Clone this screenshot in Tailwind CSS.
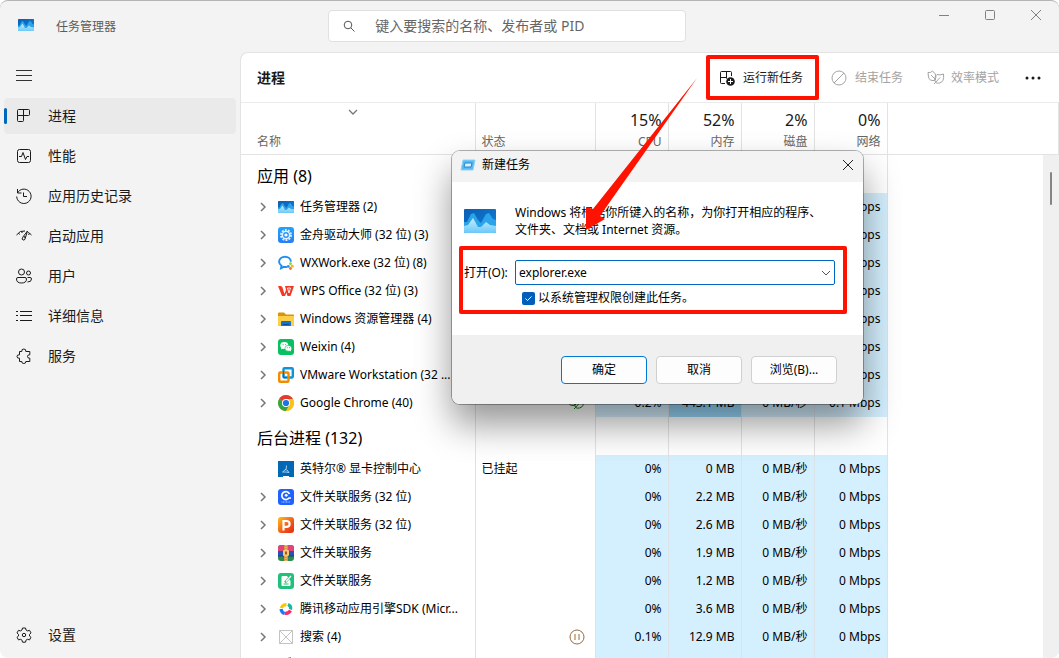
<!DOCTYPE html>
<html lang="zh-CN">
<head>
    <meta charset="UTF-8">
    <meta name="viewport" content="width=device-width, initial-scale=1.0">
    <title>任务管理器</title>
    <script src="https://cdn.jsdelivr.net/npm/@tailwindcss/browser@4"></script>
</head>
<body class="h-screen overflow-hidden bg-white font-['Noto_Sans','Noto_Sans_CJK_SC',sans-serif] text-xs text-[#1a1a1a]">
    <!-- Shared icons -->
    <svg class="absolute size-0" aria-hidden="true">
        <defs>
            <linearGradient id="tmSky" x1="0" y1="0" x2="1" y2="1"><stop offset="0" stop-color="#0a5fb4"/><stop offset="1" stop-color="#1080d6"/></linearGradient>
            <linearGradient id="tmWave" x1="0" y1="0" x2="0" y2="1"><stop offset="0" stop-color="#c4efff"/><stop offset="1" stop-color="#6cc8f8"/></linearGradient>
            <linearGradient id="pGrad" x1="0" y1="0" x2="1" y2="1"><stop offset="0" stop-color="#ffc21c"/><stop offset=".6" stop-color="#f2541b"/><stop offset="1" stop-color="#e02a10"/></linearGradient>
            <linearGradient id="blueGrad" x1="0" y1="0" x2="0" y2="1"><stop offset="0" stop-color="#1fa4fb"/><stop offset="1" stop-color="#2b7df5"/></linearGradient>
        </defs>
        <symbol id="taskmgr" viewBox="0 0 32 24">
            <rect width="32" height="24" rx="1" fill="url(#tmSky)"/>
            <path d="M0 13h3l4-8 3-1 4 7 3 3 5-9 3-1 4 6 3 1v10H0z" fill="#2ba3ea"/>
            <path d="M0 17l4-1 5-7 5 9h3l5-5 4 3 6 1v6q0 1-1 1H1q-1 0-1-1z" fill="url(#tmWave)"/>
        </symbol>
        <symbol id="chevron" viewBox="0 0 8 10"><path d="M2 1l4 4-4 4" fill="none" stroke="#777" stroke-width="1.5"/></symbol>
        <symbol id="driver" viewBox="0 0 16 16">
            <rect width="16" height="16" rx="3" fill="url(#blueGrad)"/>
            <circle cx="8" cy="8" r="5" fill="none" stroke="#d6ecff" stroke-width="2" stroke-dasharray="2 1.1"/>
            <circle cx="8" cy="8" r="3.600" fill="none" stroke="#e6f4ff" stroke-width="1.4"/>
            <circle cx="8" cy="8" r="1.6" fill="#fff"/>
        </symbol>
        <symbol id="wxwork" viewBox="0 0 16 16">
            <path d="M9 11.8c-1 .3-2.200.3-3.200 0L3 13.200l.5-2.500C1.700 9.500 1 8 1.100 6.500 1.400 3.600 4 1.700 7 1.700s5.800 2 5.900 5" fill="none" stroke="#1e8ff0" stroke-width="1.900"/>
            <circle cx="12.500" cy="8.700" r="1.400" fill="#8cd13c"/><circle cx="14.300" cy="11.200" r="1.400" fill="#fbb117"/><circle cx="12.500" cy="13.500" r="1.400" fill="#fb6a2a"/><circle cx="10.300" cy="11.400" r="1.400" fill="#2a8ff5"/>
        </symbol>
        <symbol id="wps" viewBox="0 0 16 16">
            <path d="M0 3h4l2.500 8L8 6.500 7 3h9l-3.500 10h-3L8.500 9.500 7 13H4z" fill="#f03a26"/>
            <path d="M3 3h2l2 6M9.500 5h3L11 10 9.500 5" fill="none" stroke="#fff" stroke-width=".9"/>
        </symbol>
        <symbol id="folder" viewBox="0 0 16 16">
            <path d="M0 2.500q0-1 1-1h5l2 2h7q1 0 1 1V14q0 1-1 1H1q-1 0-1-1z" fill="#d99408"/>
            <path d="M0 5h16v9q0 1-1 1H1q-1 0-1-1z" fill="#fccf49"/>
            <path d="M3 15v-4q0-1 1-1h8q1 0 1 1v4z" fill="#1673c8"/><path d="M5 13h6v1H5z" fill="#0b4f96"/>
        </symbol>
        <symbol id="weixin" viewBox="0 0 16 16">
            <rect width="16" height="16" rx="3" fill="#07c160"/>
            <ellipse cx="6.300" cy="6.500" rx="4" ry="3.400" fill="#fff"/><path d="M3.500 8l-.5 2.500L6 9z" fill="#fff"/>
            <ellipse cx="10.300" cy="9.300" rx="3.400" ry="2.900" fill="#fff" stroke="#07c160" stroke-width=".6"/><path d="M11 11l2 1.500-.2-2.500z" fill="#fff"/>
            <path d="M4.700 5.700h.9M7.200 5.700h.9M8.900 8.700h.8M11 8.700h.8" stroke="#07c160"/>
        </symbol>
        <symbol id="vmware" viewBox="0 0 16 16">
            <rect x="5.500" y="1.200" width="9.300" height="9.300" rx="1" fill="none" stroke="#0f95d7" stroke-width="2.400"/>
            <rect x="1.200" y="5.500" width="9.300" height="9.300" rx="1" fill="none" stroke="#f38b00" stroke-width="2.400"/>
            <path d="M5.500 4v6.500H9" fill="none" stroke="#0a6cab" stroke-width="1.200"/>
        </symbol>
        <symbol id="chrome" viewBox="0 0 16 16">
            <circle cx="8" cy="8" r="8" fill="#fbc116"/>
            <path d="M8 8L1.100 4A8 8 0 0 1 14.900 4H8z" fill="#e33b2e"/>
            <path d="M8 8L1.100 4A8 8 0 0 0 8 16l3.500-6z" fill="#2da44e"/>
            <path d="M8 4h6.900A8 8 0 0 1 8 16l3.500-6z" fill="#fbc116"/>
            <circle cx="8" cy="8" r="4" fill="#fff"/><circle cx="8" cy="8" r="3.100" fill="#1a73e8"/>
        </symbol>
        <symbol id="intel" viewBox="0 0 16 16">
            <rect width="16" height="16" fill="#0068b5"/>
            <path d="M8.500 4.500L8 9.500M8 8l-3.500 3h3.500l3 .5L9 9" fill="none" stroke="#cfe8fb" stroke-width=".8"/><path d="M5 15h6v1H5z" fill="#fff"/>
        </symbol>
        <symbol id="player" viewBox="0 0 16 16">
            <rect width="16" height="16" rx="3" fill="#1f62ff"/>
            <path d="M11.500 5A4 4 0 1 0 11 9h2" fill="none" stroke="#fff" stroke-width="1.700"/><circle cx="8.200" cy="6.300" r="1.400" fill="#fff"/>
            <path d="M3.500 13h9" stroke="#7fa6ff" stroke-width="1.600" stroke-dasharray="1 .5"/>
        </symbol>
        <symbol id="pdf" viewBox="0 0 16 16">
            <rect width="16" height="16" rx="3" fill="url(#pGrad)"/>
            <path d="M5.500 13.500V4H9q2.600.3 2.600 2.900T9 9.800H5.500" fill="none" stroke="#fff" stroke-width="2.200"/>
        </symbol>
        <symbol id="archive" viewBox="0 0 16 16">
            <rect width="16" height="16" rx="3" fill="#2e8b4f"/>
            <path d="M0 6h16V3q0-3-3-3H3Q0 0 0 3z" fill="#e0447a"/><path d="M0 6h16v5H0z" fill="#2753b5"/>
            <path d="M0 10.500h16v1H0z" fill="#1b3d80"/>
            <path d="M6 0h4v16H6z" fill="#d9963f"/><path d="M8 0v5M8 11v5" stroke="#f8dc98" stroke-dasharray="1 1"/>
            <rect x="5" y="5" width="6" height="6" rx="1" fill="#f2c877"/><path d="M7 6.500h2v3H7z" fill="#a55a26"/>
        </symbol>
        <symbol id="editor" viewBox="0 0 16 16">
            <rect width="16" height="16" rx="3" fill="#22c17b"/>
            <path d="M9 3H4.500Q3.500 3 3.500 4v8q0 1 1 1h7q1 0 1-1V8z" fill="#fff"/>
            <path d="M7 9.500l5.500-6" stroke="#22c17b" stroke-width="2.400"/><path d="M8 8.500l5-5.500" stroke="#fff" stroke-width="1.200"/><path d="M5.500 11h5" stroke="#22c17b"/>
        </symbol>
        <symbol id="tencent" viewBox="0 0 16 16">
            <g fill="none" stroke-width="3.200"><path d="M3.500 7q.5-3 5-3.500" stroke="#ffc400"/><path d="M10 3.500Q13.500 5 12.500 8.500" stroke="#16b8a4"/><path d="M12.500 9.500Q11 12.500 6.500 12.500" stroke="#ff2a6a"/><path d="M6.500 12.500Q3.500 11.500 3 8" stroke="#187bf5"/></g>
        </symbol>
        <symbol id="missing" viewBox="0 0 16 16"><path d="M1.500 1.500h13v13h-13zl13 13m0-13l-13 13" fill="none" stroke="#c4c4c4"/></symbol>
        <symbol id="green" viewBox="0 0 16 16"><path d="M8 2.500Q9 .5 13 0v3z" fill="#4da32f"/></symbol>
        <symbol id="leaf" viewBox="0 0 18 16">
            <path d="M1 2.500q3 .5 4.500-1.500Q9 3.500 9 7l-1.500 3.500Q2 11 1.500 7zM4 5l5 5M8.500 12.500Q6.500 7 10 4.500q3 1 6.500-.500 1 8-4 9-2.500.5-4-.500L7 14M8.500 12.500l4.500-5" fill="none" stroke="currentColor"/>
        </symbol>
    </svg>

    <div class="flex h-full flex-col overflow-hidden rounded-lg border-t border-[#b4b4b4] bg-[#f3f3f3]">
        <!-- Title bar -->
        <header class="relative flex h-[51px] shrink-0 items-center justify-between">
            <div class="flex items-center gap-[22px] pl-[18px]">
                <svg class="mb-1 h-3 w-4"><use href="#taskmgr"/></svg>
                <h1 class="text-[#5c5c5c]">任务管理器</h1>
            </div>
            <label class="absolute left-[31%] top-[9px] flex h-8 w-[358px] items-center gap-5 rounded border border-[#e0e0e0] bg-white px-3.5">
                <svg class="size-3" viewBox="0 0 12 12" fill="none" stroke="#555"><circle cx="5" cy="5" r="3.800"/><path d="M8 8l3.500 3.500"/></svg>
                <input type="search" aria-label="搜索" placeholder="键入要搜索的名称、发布者或 PID" class="flex-1 text-sm outline-none placeholder:text-[#666]">
            </label>
            <div class="flex h-full gap-[34px] pr-[17px] pt-2 text-[#808080]">
                <button aria-label="最小化" class="size-3"><svg viewBox="0 0 12 12" fill="none" stroke="currentColor"><path d="M1 6.500h10"/></svg></button>
                <button aria-label="最大化" class="size-3"><svg viewBox="0 0 12 12" fill="none" stroke="currentColor"><rect x="1.500" y="1.500" width="9" height="9" rx="1"/></svg></button>
                <button aria-label="关闭" class="size-3"><svg viewBox="0 0 12 12" fill="none" stroke="currentColor"><path d="M1 1l10 10M11 1L1 11"/></svg></button>
            </div>
        </header>

        <div class="flex min-h-0 flex-1">
            <!-- Sidebar -->
            <nav class="flex w-60 shrink-0 flex-col px-1 pb-[3px] text-sm">
                <button aria-label="导航" class="flex h-[46px] items-center pl-3"><svg class="size-4" viewBox="0 0 16 16" stroke="#333"><path d="M0 3.500h16M0 8.500h16M0 13.500h16"/></svg></button>
                <div class="flex flex-col">
                    <a href="#" class="flex h-9 items-center rounded bg-[#eaeaea]">
                        <span class="h-4 w-[3px] rounded bg-[#0067c0]"></span>
                        <svg class="ml-[9px] mr-4 size-4" viewBox="0 0 16 16" fill="none" stroke="currentColor"><path d="M2.500 1.500h10q1 0 1 1v4q0 1-1 1h-11v-5q0-1 1-1zM7.500 1.500v11q0 1-1 1h-4q-1 0-1-1v-5"/></svg>进程
                    </a>
                    <a href="#" class="mt-0.5 flex h-10 items-center pl-3">
                        <svg class="mr-4 size-4" viewBox="0 0 16 16" fill="none" stroke="currentColor"><rect x="1.500" y="1.500" width="13" height="13" rx="2"/><path d="M3 8.500h2.500l1.500-4 2.500 7 1.500-3h2"/></svg>性能
                    </a>
                    <a href="#" class="flex h-10 items-center pl-3">
                        <svg class="mr-4 size-4" viewBox="0 0 16 16" fill="none" stroke="currentColor"><path d="M1.500 1v4h4M1.500 5a7.200 7.200 0 1 1-.8 3.500M7.500 4.500v4h3.500"/></svg>应用历史记录
                    </a>
                    <a href="#" class="flex h-10 items-center pl-3">
                        <svg class="mr-4 size-4" viewBox="0 0 16 16" fill="none" stroke="currentColor"><path d="M.5 7Q4 2 9 3M12 4.500q2 .8 3.500 2.500M2.500 5l1 1.500M13.500 5.500l-1 1.500M6 3.500V5"/><path d="M11.500 3L6.500 9.500q-1 2 .5 2.500t2-1zM8 10l1-2"/></svg>启动应用
                    </a>
                    <a href="#" class="flex h-10 items-center pl-3">
                        <svg class="mr-4 size-4" viewBox="0 0 16 16" fill="none" stroke="currentColor"><circle cx="5.500" cy="4" r="3"/><circle cx="12.500" cy="5" r="2"/><path d="M2 9.500h7q1.500 0 1.500 1.500 0 4-5 4t-5-4q0-1.500 1.500-1.500zM11.500 9.500h2.500q1.500 0 1.500 1.500 0 3-4 3"/></svg>用户
                    </a>
                    <a href="#" class="flex h-10 items-center pl-3">
                        <svg class="mr-4 size-4" viewBox="0 0 16 16" fill="none" stroke="currentColor"><path d="M0 3.500h2M4 3.500h12M0 7.500h2M4 7.500h12M0 12.500h2M4 12.500h12"/></svg>详细信息
                    </a>
                    <a href="#" class="flex h-10 items-center pl-3">
                        <svg class="mr-4 size-4" viewBox="0 0 16 16" fill="none" stroke="currentColor"><path d="M3.500 3.500h2.300q-.5-2.500 2-2.500t2 2.500h4v3.300q-2.300-.3-2.300 1.700t2.300 1.700v3.300h-4q.3 2-2 2t-2-2H3.500v-3.300q-2.500.300-2.500-1.700t2.500-1.700z"/></svg>服务
                    </a>
                </div>
                <a href="#" class="mt-auto flex h-10 items-center pl-3">
                    <svg class="mr-4 size-4" viewBox="0 0 16 16" fill="none" stroke="currentColor"><path d="M6.500 1h3l.5 2 1.500.9 2-.6 1.500 2.600L13.500 7.500v1.500l1.500 1.300-1.500 2.600-2-.6-1.500.9-.5 2h-3l-.5-2-1.500-.9-2 .6L1 10.300 2.500 9V7.500L1 5.900l1.500-2.600 2 .6L6 3z"/><circle cx="8" cy="8" r="1.700"/></svg>设置
                </a>
            </nav>

            <!-- Processes page -->
            <main class="relative flex min-w-0 flex-1 flex-col overflow-hidden rounded-tl-lg border-l border-t border-[#e3e3e3] bg-white">
                <div class="flex h-[50px] shrink-0 items-center justify-between border-b border-[#ebebeb] px-4">
                    <h2 class="text-sm font-semibold">进程</h2>
                    <div class="flex items-center gap-6">
                        <button class="flex items-center gap-2">
                            <svg class="size-4" viewBox="0 0 16 16" fill="none" stroke="currentColor"><path d="M6 13.500H2.500q-1 0-1-1v-10q0-1 1-1h9q1 0 1 1V6M7.500 1.500v12M1.500 7.500H8"/><circle cx="11.500" cy="11.500" r="5" fill="#fff" stroke="none"/><circle cx="11.500" cy="11.500" r="4.300" fill="#1a1a1a" stroke="none"/><path d="M11.500 9v5M9 11.500h5" stroke="#fff"/></svg>运行新任务
                        </button>
                        <button disabled class="ml-1 flex items-center gap-2 text-[#a3a3a3]">
                            <svg class="size-4" viewBox="0 0 16 16" fill="none" stroke="currentColor"><circle cx="8" cy="8" r="7"/><path d="M3 13L13 3"/></svg>结束任务
                        </button>
                        <button disabled class="flex items-center gap-1.5 text-[#a3a3a3]">
                            <svg class="h-4 w-[18px]"><use href="#leaf"/></svg>效率模式
                        </button>
                        <button aria-label="更多" class="ml-0.5 w-[18px]"><svg viewBox="0 0 18 16" fill="currentColor"><circle cx="2" cy="8" r="1.500"/><circle cx="8" cy="8" r="1.500"/><circle cx="14" cy="8" r="1.500"/></svg></button>
                    </div>
                </div>

                <table class="w-full table-fixed border-collapse">
                    <thead>
                        <tr class="h-[51px] border-b border-[#e3e3e3] text-[#666] *:border-r *:border-[#e3e3e3] *:pb-1 *:align-bottom *:font-normal">
                            <th class="w-[234px] pl-4 text-left">
                                <svg class="mb-[19px] ml-[91px] h-[6px] w-2.5" viewBox="0 0 10 6" fill="none" stroke="#777" stroke-width="1.300"><path d="M1 1l4 4 4-4"/></svg>名称
                            </th>
                            <th class="w-[120px] pl-1.5 text-left">状态</th>
                            <th class="w-[73px] pr-1.5 text-right"><div class="pb-0.5 text-base text-[#1a1a1a]">15%</div>CPU</th>
                            <th class="w-[73px] pr-1.5 text-right"><div class="pb-0.5 text-base text-[#1a1a1a]">52%</div>内存</th>
                            <th class="w-[73px] pr-1.5 text-right"><div class="pb-0.5 text-base text-[#1a1a1a]">2%</div>磁盘</th>
                            <th class="w-[73px] pr-1.5 text-right"><div class="pb-0.5 text-base text-[#1a1a1a]">0%</div>网络</th>
                            <th class="border-r-0"></th>
                        </tr>
                    </thead>
                    <tbody id="processRows" class="text-black"></tbody>
                </table>

                <div class="absolute bottom-0 right-0 top-[102px] w-4 bg-[#f0f0f0]">
                    <div class="ml-[7px] mt-[17px] h-[33px] w-0.5 rounded bg-[#858585]"></div>
                </div>
            </main>
        </div>
    </div>

    <!-- New task dialog -->
    <section role="dialog" aria-labelledby="dialogTitle" class="absolute left-[452px] top-[151px] w-[411px] overflow-hidden rounded-lg bg-white text-black shadow-[0_0_0_1px_rgba(0,0,0,0.3),0_20px_36px_rgba(0,0,0,0.42)]">
        <div class="flex h-[31px] items-center gap-1.5 bg-[#f3f3f3] pb-[3px] pl-2 pr-[9px]">
            <svg class="h-3 w-4" viewBox="0 0 16 12"><path d="M3 1h12l-2 10H1z" fill="#59b9f0" stroke="#8fd3f7"/><path d="M5 4h7l-1 4H4z" fill="#d9f2ff" stroke="#1e86cf"/></svg>
            <h2 id="dialogTitle" class="flex-1">新建任务</h2>
            <button aria-label="关闭" class="size-3"><svg viewBox="0 0 12 12" stroke="#222"><path d="M1 1l10 10M11 1L1 11"/></svg></button>
        </div>
        <div class="h-[153px] px-3 pt-[22px]">
            <div class="flex items-center gap-[19px]">
                <svg class="h-6 w-8 shrink-0"><use href="#taskmgr"/></svg>
                <p class="whitespace-nowrap leading-[17px]">Windows 将根据你所键入的名称，为你打开相应的程序、<br>文件夹、文档或 Internet 资源。</p>
            </div>
            <div class="mt-[22px] flex items-center">
                <label for="openName" class="w-[51px] whitespace-nowrap">打开(O):</label>
                <div class="relative">
                    <select id="openName" class="block h-[25px] w-80 appearance-none rounded-xs border border-[#0067c0] bg-white pl-[3px]">
                        <option>explorer.exe</option>
                    </select>
                    <svg class="pointer-events-none absolute right-1 top-2.5 h-[6px] w-2.5" viewBox="0 0 10 6" fill="none" stroke="#555"><path d="M1 1l4 4 4-4"/></svg>
                </div>
            </div>
            <label class="ml-[58px] mt-[5px] flex items-center gap-[3px]">
                <span class="relative flex">
                    <input type="checkbox" checked class="size-[13px] appearance-none rounded-xs bg-[#005fb8]">
                    <svg class="pointer-events-none absolute inset-0 size-[13px]" viewBox="0 0 13 13" fill="none" stroke="#fff"><path d="M3.500 6.500l2 2 4-4"/></svg>
                </span>
                以系统管理权限创建此任务。
            </label>
        </div>
        <div class="flex justify-end gap-[9px] bg-[#f0f0f0] px-[26px] pb-5 pt-[21px]">
            <button class="h-7 w-[86px] rounded border border-[#0078d4] bg-[#fdfdfd]">确定</button>
            <button class="h-7 w-[86px] rounded border border-[#d0d0d0] bg-[#fdfdfd]">取消</button>
            <button class="h-7 w-[86px] rounded border border-[#d0d0d0] bg-[#fdfdfd]">浏览(B)...</button>
        </div>
    </section>

    <!-- Callouts -->
    <div class="pointer-events-none absolute left-[706px] top-[55px] h-[45px] w-[113px] rounded-xs border-4 border-[#ff1300]"></div>
    <div class="pointer-events-none absolute left-[459px] top-[246px] h-[68px] w-[388px] rounded-xs border-4 border-[#ff1300]"></div>
    <svg class="pointer-events-none absolute left-[580px] top-[70px] h-[170px] w-[124px]" viewBox="0 0 124 170"><path d="M117 8L13 139l-7-2v23l19-11-5-3z" fill="#ff1300"/></svg>

    <script>
        // [icon, name, cpu, memory, disk, network, status]
        const apps = [
            ['taskmgr', '任务管理器 (2)', '', '', '', '0 Mbps'],
            ['driver', '金舟驱动大师 (32 位) (3)', '', '', '', '0 Mbps'],
            ['wxwork', 'WXWork.exe (32 位) (8)', '', '', '', '0 Mbps'],
            ['wps', 'WPS Office (32 位) (3)', '', '', '', '0 Mbps'],
            ['folder', 'Windows 资源管理器 (4)', '', '', '', '0 Mbps'],
            ['weixin', 'Weixin (4)', '', '', '', '0 Mbps'],
            ['vmware', 'VMware Workstation (32 ...', '', '', '', '0 Mbps'],
            ['chrome', 'Google Chrome (40)', '0.2%', '443.1 MB', '0 MB/秒', '0.1 Mbps', 'leaf']
        ];
        const background = [
            ['intel', '英特尔® 显卡控制中心', '0%', '0 MB', '0 MB/秒', '0 Mbps', '已挂起'],
            ['player', '文件关联服务 (32 位)', '0%', '2.2 MB', '0 MB/秒', '0 Mbps'],
            ['pdf', '文件关联服务 (32 位)', '0%', '2.6 MB', '0 MB/秒', '0 Mbps'],
            ['archive', '文件关联服务', '0%', '1.9 MB', '0 MB/秒', '0 Mbps'],
            ['editor', '文件关联服务', '0%', '1.2 MB', '0 MB/秒', '0 Mbps'],
            ['tencent', '腾讯移动应用引擎SDK (Micr...', '0%', '3.6 MB', '0 MB/秒', '0 Mbps'],
            ['missing', '搜索 (4)', '0.1%', '12.9 MB', '0 MB/秒', '0 Mbps', 'pause'],
            ['green', '', '', '', '', '']
        ];

        const statusIcons = {
            leaf: '<svg class="ml-auto mr-2.5 h-4 w-[18px] text-[#107c10]"><use href="#leaf"/></svg>',
            pause: '<svg class="ml-auto mr-2.5 size-4" viewBox="0 0 16 16" fill="none" stroke="#9a6a3c"><circle cx="8" cy="8" r="7"/><path d="M6 5v6M10 5v6"/></svg>'
        };

        function groupRow(title, height) {
            return `<tr class="${height} *:border-r *:border-[#e3e3e3]">
                <td class="pl-4 pt-1 text-base">${title}</td><td></td><td></td><td></td><td></td><td></td><td class="border-r-0"></td>
            </tr>`;
        }

        function processRow([icon, name, cpu, memory, disk, network, status = '']) {
            const arrow = icon === 'intel' ? '' : '<svg class="h-2.5 w-2"><use href="#chevron"/></svg>';
            const memoryColor = icon === 'chrome' ? 'bg-[#98d8fa]' : 'bg-[#d4effe]';
            return `<tr class="h-7 *:border-r *:border-[#dbe3e8] *:whitespace-nowrap *:p-0">
                <td><div class="flex items-center pl-[18px]">
                    <span class="w-[19px] shrink-0">${arrow}</span>
                    <svg class="mr-1.5 size-4 shrink-0"><use href="#${icon}"/></svg><span>${name}</span>
                </div></td>
                <td><div class="pl-1.5">${statusIcons[status] || status}</div></td>
                <td class="bg-[#d4effe] text-right"><div class="pr-1.5">${cpu}</div></td>
                <td class="${memoryColor} text-right"><div class="pr-1.5">${memory}</div></td>
                <td class="bg-[#d4effe] text-right"><div class="pr-1.5">${disk}</div></td>
                <td class="bg-[#d4effe] text-right"><div class="pr-1.5">${network}</div></td>
                <td class="border-r-0"></td>
            </tr>`;
        }

        document.getElementById('processRows').innerHTML =
            groupRow('应用 (8)', 'h-[39px]') + apps.map(processRow).join('') +
            groupRow('后台进程 (132)', 'h-[38px]') + background.map(processRow).join('');
    </script>
</body>
</html>
